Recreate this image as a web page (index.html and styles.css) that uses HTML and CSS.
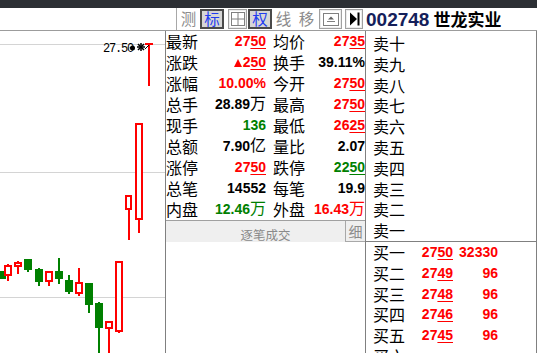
FILE: index.html
```html
<!DOCTYPE html>
<html>
<head>
<meta charset="utf-8">
<link rel="stylesheet" href="styles.css">
</head>
<body>
<div class="app">
  <div class="topbar"></div>
  <div class="header">
    <div class="hleft"></div>
    <div class="tools">
      <span class="tb flat w23">测</span>
      <span class="tb on w24">标</span>
      <span class="tb box ml4 w19"><svg width="14" height="14" viewBox="0 0 14 14"><rect x="0.5" y="0.5" width="13" height="13" fill="none" stroke="#808080"/><line x1="7" y1="1" x2="7" y2="13" stroke="#808080"/><line x1="1" y1="7" x2="13" y2="7" stroke="#808080"/></svg></span>
      <span class="tb on ml1 w24">权</span>
      <span class="tb flat w23">线</span>
      <span class="tb flat w23">移</span>
      <span class="tb box ml1 w23"><svg width="16" height="13" viewBox="0 0 16 13"><rect x="0.5" y="0.5" width="15" height="12" fill="none" stroke="#808080"/><polygon points="5,6.5 8,3.5 11,6.5" fill="#606060"/><line x1="4" y1="8.5" x2="12" y2="8.5" stroke="#808080"/></svg></span>
      <span class="tb box ml3 w18"><svg width="11" height="14" viewBox="0 0 11 14"><polygon points="1,0.5 8,7 1,13.5" fill="#000"/><rect x="8.5" y="0.5" width="2" height="13" fill="#000"/></svg></span>
    </div>
    <div class="title"><span class="code">002748</span><span class="name">世龙实业</span></div>
  </div>
  <div class="main">
    <div class="chart">
      <svg class="kline" width="165" height="322" viewBox="0 31 165 322">
        <line x1="0" y1="44.5" x2="165" y2="44.5" stroke="#d4d4d4"/>
        <line x1="0" y1="172.5" x2="165" y2="172.5" stroke="#d4d4d4"/>
        <line x1="0" y1="297.5" x2="165" y2="297.5" stroke="#d4d4d4"/>
        <g stroke-width="2">
          <line x1="8" y1="264" x2="8" y2="281" stroke="#f00"/>
          <line x1="18" y1="261" x2="18" y2="274" stroke="#f00"/>
          <line x1="28" y1="259" x2="28" y2="272" stroke="#008000"/>
          <line x1="39" y1="268" x2="39" y2="286" stroke="#008000"/>
          <line x1="49" y1="271" x2="49" y2="286" stroke="#f00"/>
          <line x1="59" y1="258" x2="59" y2="284" stroke="#008000"/>
          <line x1="69" y1="275" x2="69" y2="294" stroke="#008000"/>
          <line x1="79" y1="268" x2="79" y2="296" stroke="#f00"/>
          <line x1="89" y1="283" x2="89" y2="313" stroke="#008000"/>
          <line x1="99" y1="302" x2="99" y2="353" stroke="#008000"/>
          <line x1="109" y1="321" x2="109" y2="353" stroke="#f00"/>
          <line x1="119" y1="261" x2="119" y2="333" stroke="#f00"/>
          <line x1="129" y1="195" x2="129" y2="240" stroke="#f00"/>
          <line x1="139" y1="123" x2="139" y2="233" stroke="#f00"/>
          <line x1="149" y1="43" x2="149" y2="86" stroke="#f00"/>
          <line x1="145" y1="44" x2="153" y2="44" stroke="#f00"/>
        </g>
        <g fill="#008000">
          <rect x="-2" y="271" width="8" height="8"/>
          <rect x="24" y="259" width="8" height="11"/>
          <rect x="35" y="269" width="8" height="13"/>
          <rect x="55" y="271" width="8" height="8"/>
          <rect x="65" y="280" width="8" height="12"/>
          <rect x="85" y="283" width="8" height="22"/>
          <rect x="95" y="303" width="8" height="25"/>
        </g>
        <g fill="#fff" stroke="#f00" stroke-width="2">
          <rect x="5" y="266" width="6" height="9"/>
          <rect x="15" y="263" width="6" height="3"/>
          <rect x="46" y="272" width="6" height="9"/>
          <rect x="76" y="283" width="6" height="10"/>
          <rect x="106" y="322" width="6" height="6"/>
          <rect x="116" y="262" width="6" height="69"/>
          <rect x="126" y="196" width="5" height="13"/>
          <rect x="136" y="124" width="6" height="95"/>
        </g>
        <text class="plabel" x="103" y="52">27.50</text>
        <circle cx="132.5" cy="48" r="2.5" fill="#000"/>
        <g stroke="#000" stroke-width="1.5">
          <line x1="137" y1="47" x2="145" y2="47"/>
          <line x1="141" y1="43" x2="141" y2="51"/>
          <line x1="138" y1="44" x2="144" y2="50"/>
          <line x1="144" y1="44" x2="138" y2="50"/>
        </g>
        <line x1="145" y1="49" x2="149" y2="45" stroke="#000" stroke-width="1"/>
      </svg>
    </div>
    <div class="quote">
      <div class="qgrid">
        <span class="lb">最新</span><span class="v red">27<span class="ul">50</span></span><span class="lb l2">均价</span><span class="v red">27<span class="ul">35</span></span>
        <span class="lb">涨跌</span><span class="v red"><span class="up"></span>2<span class="ul">50</span></span><span class="lb l2">换手</span><span class="v">39.11%</span>
        <span class="lb">涨幅</span><span class="v red">10.00%</span><span class="lb l2">今开</span><span class="v red">27<span class="ul">50</span></span>
        <span class="lb">总手</span><span class="v">28.89<span class="cj">万</span></span><span class="lb l2">最高</span><span class="v red">27<span class="ul">50</span></span>
        <span class="lb">现手</span><span class="v green">136</span><span class="lb l2">最低</span><span class="v red">26<span class="ul">25</span></span>
        <span class="lb">总额</span><span class="v">7.90<span class="cj">亿</span></span><span class="lb l2">量比</span><span class="v">2.07</span>
        <span class="lb">涨停</span><span class="v red">27<span class="ul">50</span></span><span class="lb l2">跌停</span><span class="v green">22<span class="ul">50</span></span>
        <span class="lb">总笔</span><span class="v">14552</span><span class="lb l2">每笔</span><span class="v">19.9</span>
        <span class="lb">内盘</span><span class="v green">12.46<span class="cj">万</span></span><span class="lb l2">外盘</span><span class="v red">16.43<span class="cj">万</span></span>
      </div>
      <div class="ticks"><span class="tt">逐笔成交</span><span class="xi">细</span></div>
    </div>
    <div class="book">
      <div class="sell">
        <div class="brow"><span class="bl">卖十</span></div>
        <div class="brow"><span class="bl">卖九</span></div>
        <div class="brow"><span class="bl">卖八</span></div>
        <div class="brow"><span class="bl">卖七</span></div>
        <div class="brow"><span class="bl">卖六</span></div>
        <div class="brow"><span class="bl">卖五</span></div>
        <div class="brow"><span class="bl">卖四</span></div>
        <div class="brow"><span class="bl">卖三</span></div>
        <div class="brow"><span class="bl">卖二</span></div>
        <div class="brow"><span class="bl">卖一</span></div>
      </div>
      <div class="buy">
        <div class="brow"><span class="bl">买一</span><span class="bp">27<span class="ul">50</span></span><span class="bv">32330</span></div>
        <div class="brow"><span class="bl">买二</span><span class="bp">27<span class="ul">49</span></span><span class="bv">96</span></div>
        <div class="brow"><span class="bl">买三</span><span class="bp">27<span class="ul">48</span></span><span class="bv">96</span></div>
        <div class="brow"><span class="bl">买四</span><span class="bp">27<span class="ul">46</span></span><span class="bv">96</span></div>
        <div class="brow"><span class="bl">买五</span><span class="bp">27<span class="ul">45</span></span><span class="bv">96</span></div>
        <div class="brow"><span class="bl">买六</span></div>
      </div>
    </div>
  </div>
</div>
</body>
</html>
```

FILE: styles.css
```css
html, body {
  margin: 0;
  padding: 0;
  background: #fff;
}
.app {
  width: 537px;
  height: 353px;
  overflow: hidden;
  font-family: "Noto Sans CJK SC", sans-serif;
  color: #000;
}
.topbar {
  height: 8px;
  background: #2c2f34;
}
.header {
  height: 22px;
  display: flex;
  border-bottom: 1px solid #9c9c9c;
}
.hleft {
  width: 176px;
  border-right: 1px solid #a8a8a8;
}
.tools {
  display: flex;
  align-items: flex-start;
  padding-top: 1px;
}
.tb {
  height: 20px;
  box-sizing: border-box;
  display: flex;
  align-items: center;
  justify-content: center;
  font-size: 15.5px;
  line-height: 1;
}
.w18 { width: 18px; }
.w19 { width: 19px; }
.w23 { width: 23px; }
.w24 { width: 24px; }
.ml1 { margin-left: 1px; }
.ml3 { margin-left: 3px; }
.ml4 { margin-left: 4px; }
.flat {
  color: #8c8c8c;
}
.on {
  background: #d6d6d6;
  border: 2px solid #4a4a4a;
  color: #1f3cf0;
}
.box {
  border: 1px solid #a0a0a0;
  box-shadow: inset 0 0 0 1px #ececec;
  background: #fff;
}
.title {
  margin-left: 3px;
  display: flex;
  align-items: baseline;
  line-height: 22px;
  white-space: nowrap;
}
.code {
  font-family: "Liberation Sans", Arial, sans-serif;
  font-weight: bold;
  font-size: 19px;
  color: #14205a;
}
.name {
  font-family: "Noto Sans CJK SC", sans-serif;
  font-weight: bold;
  font-size: 17px;
  margin-left: 4px;
}
.main {
  display: flex;
  height: 322px;
}
.chart {
  width: 165px;
  border-right: 1px solid #808080;
  overflow: hidden;
}
.kline {
  display: block;
}
.plabel {
  font-family: "Liberation Mono", monospace;
  font-size: 12px;
  letter-spacing: -1.2px;
  fill: #000;
}
.quote {
  width: 199px;
  border-right: 1px solid #808080;
}
.qgrid {
  display: grid;
  grid-template-columns: 34px 66px 41px 58px;
  grid-auto-rows: 21px;
  border-bottom: 1px solid #a0a0a0;
}
.lb {
  font-size: 16px;
  line-height: 21px;
  white-space: nowrap;
}
.l2 {
  padding-left: 7px;
}
.v {
  font-family: "Liberation Sans", Arial, sans-serif;
  font-weight: bold;
  font-size: 14px;
  line-height: 21px;
  text-align: right;
  white-space: nowrap;
}
.cj {
  font-family: "Noto Sans CJK SC", sans-serif;
  font-weight: normal;
  font-size: 16px;
  line-height: 14px;
}
.red { color: #ff0000; }
.green { color: #008000; }
.ul {
  text-decoration: underline;
  text-underline-offset: 2px;
  text-decoration-thickness: 1px;
}
.up {
  display: inline-block;
  width: 0;
  height: 0;
  border-left: 4px solid transparent;
  border-right: 4px solid transparent;
  border-bottom: 8px solid #ff0000;
  margin-right: 1px;
}
.ticks {
  height: 21px;
  background: #efefef;
  position: relative;
  text-align: center;
}
.tt {
  font-size: 12.5px;
  line-height: 21px;
  color: #8a8a8a;
}
.xi {
  position: absolute;
  right: 0;
  top: 0;
  width: 20px;
  height: 21px;
  box-sizing: border-box;
  border-left: 1px solid #a8a8a8;
  border-bottom: 1px solid #a8a8a8;
  font-size: 14px;
  line-height: 20px;
  color: #8a8a8a;
  text-align: center;
}
.book {
  width: 170px;
  border-right: 1px solid #808080;
}
.sell {
  padding-top: 2px;
  border-bottom: 1px solid #808080;
}
.brow {
  height: 20.8px;
  display: grid;
  grid-template-columns: 40px 40px 45px;
  padding-left: 7px;
  align-items: center;
}
.bl {
  font-size: 16px;
  line-height: 20.8px;
}
.bp, .bv {
  font-family: "Liberation Sans", Arial, sans-serif;
  font-weight: bold;
  font-size: 14px;
  color: #ff0000;
  text-align: right;
  line-height: 20.8px;
}
```
